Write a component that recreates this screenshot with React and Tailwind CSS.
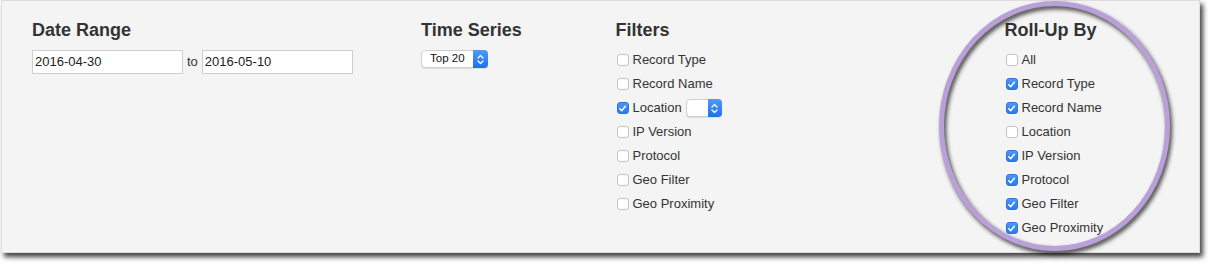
import React from 'react';

const font = { fontFamily: '"Liberation Sans", Arial, sans-serif' };

const filters = [
  { label: 'Record Type', checked: false },
  { label: 'Record Name', checked: false },
  { label: 'Location', checked: true, select: true },
  { label: 'IP Version', checked: false },
  { label: 'Protocol', checked: false },
  { label: 'Geo Filter', checked: false },
  { label: 'Geo Proximity', checked: false },
];

const rollUp = [
  { label: 'All', checked: false },
  { label: 'Record Type', checked: true },
  { label: 'Record Name', checked: true },
  { label: 'Location', checked: false },
  { label: 'IP Version', checked: true },
  { label: 'Protocol', checked: true },
  { label: 'Geo Filter', checked: true },
  { label: 'Geo Proximity', checked: true },
];

const Checkbox = ({ checked }) =>
  checked ? (
    <span className="flex h-[12px] w-[12px] items-center justify-center rounded-[3px] bg-gradient-to-b from-[#4a98f9] to-[#2a78f2] border border-[#2b74e0]">
      <svg width="9" height="9" viewBox="0 0 9 9">
        <path d="M1.8 4.8 L3.7 6.7 L7.3 2.3" fill="none" stroke="white" strokeWidth="1.5" strokeLinecap="round" strokeLinejoin="round" />
      </svg>
    </span>
  ) : (
    <span className="block h-[12px] w-[12px] rounded-[3px] border border-[#c4c4c4] bg-white" />
  );

const Stepper = ({ className }) => (
  <span className={`flex items-center justify-center rounded-r-[4px] bg-gradient-to-b from-[#4b9bfa] to-[#1f6ff0] ${className}`}>
    <svg width="7" height="11" viewBox="0 0 7 11">
      <path d="M1 4 L3.5 1.5 L6 4 M1 7 L3.5 9.5 L6 7" fill="none" stroke="white" strokeWidth="1.3" strokeLinecap="round" strokeLinejoin="round" />
    </svg>
  </span>
);

const Row = ({ item }) => (
  <div className="flex h-[24px] items-center">
    <span className="ml-px"><Checkbox checked={item.checked} /></span>
    <span className="ml-[4px] text-[13px] text-[#333]">{item.label}</span>
    {item.select && (
      <span className="ml-[4px] flex h-[18px] w-[36px] rounded-[4px] border border-[#d0d0d0] bg-white shadow-[0_1px_1px_rgba(0,0,0,0.1)]">
        <span className="flex-1" />
        <Stepper className="w-[14px] -my-px -mr-px" />
      </span>
    )}
  </div>
);

const Heading = ({ children }) => (
  <h3 className="text-[18px] font-bold leading-[22px] text-[#333]">{children}</h3>
);

export default function App() {
  return (
    <div className="relative h-[264px] w-[1210px] overflow-hidden bg-white" style={font}>
      <div className="ml-px h-[253px] w-[1199px] border border-[#dcdcdc] bg-[#f4f4f4] shadow-[3px_4px_5px_rgba(0,0,0,0.75)]">
        <div className="flex pl-[30px] pt-[18px]">
          {/* Date range */}
          <div className="w-[390px]">
            <Heading>Date Range</Heading>
            <div className="mt-[9px] flex items-center">
              <div className="flex h-[24px] w-[151px] items-center border border-[#cfcfcf] bg-white pl-[2px] text-[13px] text-[#222]">2016-04-30</div>
              <span className="mx-[4px] text-[13px] text-[#333]">to</span>
              <div className="flex h-[24px] w-[151px] items-center border border-[#cfcfcf] bg-white pl-[2px] text-[13px] text-[#222]">2016-05-10</div>
            </div>
          </div>

          {/* Time series */}
          <div className="w-[195px]">
            <Heading>Time Series</Heading>
            <div className="mt-[9px] flex h-[18px] w-[67px] rounded-[4px] border border-[#d0d0d0] bg-white shadow-[0_1px_1px_rgba(0,0,0,0.1)]">
              <span className="flex flex-1 items-center pl-[8px] text-[11.5px] text-[#111]">Top 20</span>
              <Stepper className="w-[15px] -my-px -mr-px" />
            </div>
          </div>

          {/* Filters */}
          <div className="w-[390px]">
            <Heading>Filters</Heading>
            <div className="mt-[7px] flex flex-col">
              {filters.map((f) => (
                <Row key={f.label} item={f} />
              ))}
            </div>
          </div>

          {/* Roll-up */}
          <div className="w-[195px]">
            <Heading>Roll-Up By</Heading>
            <div className="mt-[7px] flex flex-col">
              {rollUp.map((f) => (
                <Row key={f.label} item={f} />
              ))}
            </div>
          </div>
        </div>
      </div>

      {/* annotation ring */}
      <svg className="pointer-events-none absolute left-[930px] top-0" width="260" height="264" viewBox="0 0 260 264" style={{ filter: 'drop-shadow(2px 3px 2px rgba(0,0,0,0.75))' }}>
        <ellipse cx="124.5" cy="126" rx="113" ry="122.5" fill="none" stroke="#b9a0d8" strokeWidth="5" />
      </svg>
    </div>
  );
}
